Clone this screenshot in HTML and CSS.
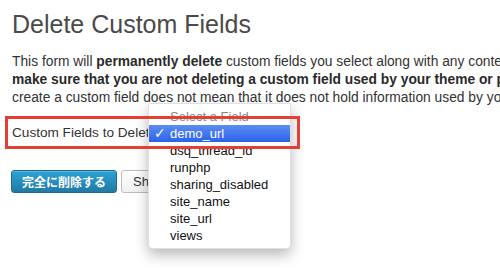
FILE: index.html
```html
<!DOCTYPE html>
<html>
<head>
<meta charset="utf-8">
<link rel="stylesheet" href="styles.css">
</head>
<body>
<div class="page">
  <h1 class="title">Delete Custom Fields</h1>
  <p class="intro">This form will <b>permanently delete</b> custom fields you select along with any content associated with it. Please<br><b>make sure that you are not deleting a custom field used by your theme or plugins.</b> Just because you did not<br>create a custom field does not mean that it does not hold information used by your theme or plugins.</p>
  <div class="field-row">
    <span class="field-label">Custom Fields to Delete</span>
  </div>
  <div class="actions">
    <button class="btn btn-primary">完全に削除する</button>
    <button class="btn btn-secondary">Show Field Info</button>
  </div>
  <ul class="menu">
    <li class="menu-item placeholder">Select a Field</li>
    <li class="menu-item selected"><span class="check">✓</span>demo_url</li>
    <li class="menu-item">dsq_thread_id</li>
    <li class="menu-item">runphp</li>
    <li class="menu-item">sharing_disabled</li>
    <li class="menu-item">site_name</li>
    <li class="menu-item">site_url</li>
    <li class="menu-item">views</li>
  </ul>
</div>
</body>
</html>
```
FILE: styles.css
```css
html, body {
  margin: 0;
  padding: 0;
  background: #ffffff;
  overflow: hidden;
}
body {
  width: 500px;
  height: 270px;
  font-family: "Liberation Sans", Arial, sans-serif;
  color: #333333;
}
.page {
  position: relative;
  box-sizing: border-box;
  width: 500px;
  height: 270px;
  padding-top: 9px;
  overflow: hidden;
}
.title {
  margin: 0 0 0 12px;
  font-size: 25px;
  line-height: 30px;
  font-weight: normal;
  color: #4a4a4a;
  white-space: nowrap;
}
.intro {
  margin: 14px 0 0 12px;
  font-size: 13.8px;
  line-height: 18px;
  white-space: nowrap;
  color: #333333;
}
.intro b {
  color: #2a2a2a;
}
.field-row {
  position: relative;
  display: flex;
  align-items: center;
  box-sizing: border-box;
  margin: 9px 0 0 5px;
  width: 295px;
  height: 33px;
  padding-left: 7px;
}
.field-row::after {
  content: "";
  position: absolute;
  left: 0;
  top: 0;
  right: 0;
  bottom: 0;
  border: 3px solid #e43f35;
  z-index: 3;
  pointer-events: none;
}
.field-label {
  font-size: 13.6px;
  white-space: nowrap;
  color: #333333;
}
.actions {
  display: flex;
  gap: 4px;
  margin: 21px 0 0 11px;
}
.btn {
  box-sizing: border-box;
  height: 23px;
  border-radius: 3px;
  white-space: nowrap;
  cursor: pointer;
}
.btn-primary {
  width: 106px;
  padding: 0;
  border: 1px solid #1e6c92;
  background: linear-gradient(#2fa2d6, #2179a3);
  color: #ffffff;
  font-family: "Noto Sans CJK JP", sans-serif;
  font-size: 12px;
  font-weight: bold;
  box-shadow: inset 0 1px 0 rgba(120, 200, 235, 0.5);
}
.btn-secondary {
  padding: 0 11px;
  border: 1px solid #bbbbbb;
  background: linear-gradient(#fefefe, #f0f0f0);
  color: #333333;
  font-family: "Liberation Sans", Arial, sans-serif;
  font-size: 13px;
}
.menu {
  position: absolute;
  z-index: 2;
  left: 148px;
  top: 103px;
  width: 143px;
  box-sizing: border-box;
  margin: 0;
  padding: 4px 0 4px 0;
  list-style: none;
  background: #ffffff;
  border: 1px solid rgba(0, 0, 0, 0.12);
  border-radius: 2px 2px 5px 5px;
  box-shadow: 0 6px 14px rgba(0, 0, 0, 0.28);
  font-family: "Liberation Sans", Arial, sans-serif;
  font-size: 13px;
}
.menu-item {
  position: relative;
  height: 17px;
  line-height: 17px;
  padding-left: 21px;
  color: #111111;
  white-space: nowrap;
}
.menu-item.placeholder {
  color: #8a8a8a;
}
.menu-item.selected {
  background: linear-gradient(#5b8ef2, #2c62ea);
  color: #ffffff;
}
.check {
  position: absolute;
  left: 5px;
  top: 0;
  font-family: "DejaVu Sans", sans-serif;
  font-weight: bold;
  font-size: 14px;
}
```
